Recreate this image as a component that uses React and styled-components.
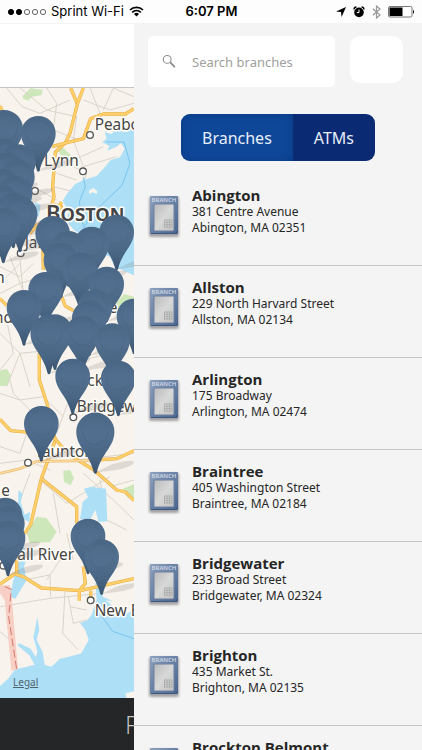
import styled, { createGlobalStyle } from 'styled-components';

const GlobalStyle = createGlobalStyle`
  * {
    box-sizing: border-box;
  }

  body {
    margin: 0;
    background: #fdfdfd;
    color: #262626;
    font-family: 'Noto Sans', 'Open Sans', sans-serif;
  }
`;

const Screen = styled.div`
  display: flex;
  flex-direction: column;
  height: 100vh;
  overflow: hidden;
`;

const StatusBar = styled.header`
  display: grid;
  grid-template-columns: 1fr auto 1fr;
  align-items: center;
  flex: none;
  height: 23px;
  padding: 0 7px 0 8px;
  background: #fdfdfd;
  color: #000;
  font-family: Inter, sans-serif;
  font-size: 13px;
  line-height: 23px;
`;

const Carrier = styled.div`
  display: flex;
  align-items: center;
  gap: 5px;
`;

const Clock = styled.time`
  font-weight: 600;
`;

const Indicators = styled.div`
  display: flex;
  align-items: center;
  justify-content: flex-end;
  gap: 7px;
`;

const Main = styled.div`
  display: flex;
  flex: 1;
  min-height: 0;
`;

const Peek = styled.section`
  display: flex;
  flex-direction: column;
  flex: none;
  width: 134px;
  overflow: hidden;
`;

const PeekHeader = styled.div`
  flex: none;
  height: 65px;
  background: #fff;
  border-top: 1px solid #f4f4f4;
  border-bottom: 1px solid #c4c4c4;
`;

const MapArea = styled.div`
  position: relative;
  flex: 1;
  min-height: 0;
  overflow: hidden;
  background: #f8f4ed;
`;

const MapDrawing = styled.svg`
  display: block;
  width: 100%;
  height: 100%;
`;

const LegalLink = styled.a`
  position: absolute;
  left: 13px;
  bottom: 9px;
  color: #4f646e;
  font-size: 10px;
  line-height: 14px;
`;

const PeekFooter = styled.footer`
  flex: none;
  height: 52px;
  padding-left: 125px;
  background: #252628;
  color: #c6c6c6;
  font-family: 'Open Sans', sans-serif;
  font-size: 25px;
  font-weight: 300;
  line-height: 52px;
  white-space: nowrap;
`;

const Panel = styled.aside`
  display: flex;
  flex-direction: column;
  flex: 1;
  min-width: 0;
  background: #f4f4f4;
`;

const SearchRow = styled.form`
  display: flex;
  align-items: flex-start;
  gap: 15px;
  padding: 13px 19px 0 14px;
`;

const SearchBox = styled.label`
  display: flex;
  align-items: center;
  flex: 1;
  min-width: 0;
  height: 51px;
  padding: 0 14px;
  gap: 15px;
  background: #fff;
  border-radius: 5px;
`;

const SearchInput = styled.input`
  flex: 1;
  min-width: 0;
  padding: 0;
  border: 0;
  outline: 0;
  background: transparent;
  color: #262626;
  font: 13px 'Noto Sans', 'Open Sans', sans-serif;

  &::placeholder {
    color: #a0a0a0;
    opacity: 1;
  }
`;

const SearchButton = styled.button`
  width: 53px;
  height: 47px;
  padding: 0;
  border: 0;
  border-radius: 10px;
  background: #fff;
`;

const Toggle = styled.div`
  display: flex;
  align-self: center;
  flex: none;
  height: 47px;
  margin: 27px 0 13px;
  border-radius: 9px;
  overflow: hidden;
`;

const ToggleButton = styled.button`
  padding: 0 21px;
  border: 0;
  background: ${props => (props.$active ? '#0f4798' : '#0a2a74')};
  box-shadow: ${props => (props.$active ? 'inset 0 0 8px #0a3a84' : 'none')};
  color: #e8effa;
  font: 16px 'Noto Sans', 'Open Sans', sans-serif;
`;

const List = styled.ul`
  flex: 1;
  min-height: 0;
  margin: 0;
  padding: 0;
  overflow-y: auto;
  scrollbar-width: none;
  list-style: none;
`;

const Row = styled.li`
  display: flex;
  gap: 10px;
  height: 92px;
  padding: 12px 12px 0;
  border-bottom: 1px solid #c4c4c4;
`;

const BranchIcon = styled.svg`
  flex: none;
  width: 36px;
  height: 48px;
  margin-top: 7px;
`;

const Name = styled.h2`
  margin: 0;
  font-family: 'Open Sans', 'Noto Sans', sans-serif;
  font-size: 15px;
  font-weight: 700;
  line-height: 18px;
`;

const Address = styled.address`
  font-size: 12px;
  font-style: normal;
  line-height: 16px;
`;

const branches = [
  { name: 'Abington', street: '381 Centre Avenue', city: 'Abington, MA 02351' },
  { name: 'Allston', street: '229 North Harvard Street', city: 'Allston, MA 02134' },
  { name: 'Arlington', street: '175 Broadway', city: 'Arlington, MA 02474' },
  { name: 'Braintree', street: '405 Washington Street', city: 'Braintree, MA 02184' },
  { name: 'Bridgewater', street: '233 Broad Street', city: 'Bridgewater, MA 02324' },
  { name: 'Brighton', street: '435 Market St.', city: 'Brighton, MA 02135' },
  { name: 'Brockton Belmont', street: '', city: '' },
];

// x, y of the pin head, in map units
const pins = [
  [12, 387, 1.1], [115, 400], [8, 468], [55, 485], [20, 510], [52, 530], [10, 560],
  [45, 580], [8, 610], [40, 630], [60, 642], [10, 675],
  [158, 700], [350, 696], [275, 732], [205, 745], [183, 780], [240, 810],
  [320, 852], [137, 868], [72, 922], [285, 920], [268, 954], [402, 948],
  [165, 995], [247, 1000], [147, 1000, 1.07], [337, 1022],
  [218, 1128], [355, 1134], [124, 1270], [286, 1295, 1.1],
  [15, 1545], [22, 1570], [24, 1614], [264, 1608], [305, 1670],
];

const Pin = ({ x, y, scale = 1 }) => (
  <g transform={`translate(${x} ${y}) scale(${scale})`}>
    <path d="M0 112 Q60 76 104 80 Q112 92 60 104 Z" fill="#77736c" opacity=".2" />
    <path d="M0 -52 A52 52 0 0 1 52 0 C52 42 16 58 4 112 Q0 118 -4 112 C-16 58 -52 42 -52 0 A52 52 0 0 1 0 -52 Z" fill="url(#pin)" />
    <circle r="35" fill="#54718f" opacity=".35" />
    <path d="M-35 0 A35 35 0 0 0 35 0" fill="none" stroke="#3e5a77" strokeWidth="3" opacity=".25" />
  </g>
);

const Roads = ({ d }) => (
  <>
    <path d={d} fill="none" stroke="#e6ab42" strokeWidth="10" strokeLinejoin="round" />
    <path d={d} fill="none" stroke="#ffd06a" strokeWidth="7" strokeLinejoin="round" />
  </>
);

const Town = ({ x, y }) => (
  <circle cx={x} cy={y} r="10" fill="#fff" stroke="#555" strokeWidth="4" />
);

const Label = styled.text`
  fill: #444;
  stroke: #fffdf8;
  stroke-width: 9px;
  stroke-linejoin: round;
  paint-order: stroke;
  font-family: 'Noto Sans', sans-serif;
  font-size: ${props => (props.$city ? 66 : 46)}px;
  font-weight: ${props => (props.$city ? 600 : 400)};
  font-variant: ${props => (props.$city ? 'small-caps' : 'normal')};
`;

const BranchMap = () => (
  <MapDrawing viewBox="0 264 402 1830" preserveAspectRatio="xMinYMin slice" role="img" aria-label="Map of branches">
    <defs>
      <linearGradient id="pin" x1="0" y1="0" x2="0" y2="1">
        <stop offset="0" stopColor="#4a6685" />
        <stop offset=".35" stopColor="#526f8f" />
        <stop offset=".7" stopColor="#496685" />
        <stop offset="1" stopColor="#3b5470" />
      </linearGradient>
    </defs>
    <rect y="264" width="402" height="1830" fill="#f8f4ed" />
    <g fill="#cde6ba">
      <path d="M68 288 L92 264 L128 270 L124 286 L96 290 L84 302 L70 296 Z" />
      <path d="M172 450 L190 444 L212 464 L216 480 L190 474 Z" />
      <path d="M344 915 L372 882 L402 890 V930 L350 940 Z" />
      <path d="M0 1112 L20 1106 L34 1128 L20 1158 L0 1158 Z" />
      <path d="M190 1412 L210 1410 L222 1434 L212 1456 L192 1446 Z" />
      <path d="M366 1468 L402 1452 V1500 L382 1490 Z" />
      <path d="M80 1600 L110 1550 L140 1555 L170 1596 L150 1626 L90 1630 Z" />
    </g>
    <g fill="none" stroke="#dad4cb" strokeWidth="3">
      <path d="M20 264 L66 320 L120 340 L210 300 M60 264 L140 330 L230 350 M140 264 L170 310 L160 390 M250 300 L330 330 L402 310 M270 264 L300 340 M340 264 L310 330 M160 390 L235 420 M230 350 L220 420 L250 500 L350 470 M180 480 L260 520 L240 580 L160 560 M170 520 L230 540 M340 264 L402 290 M220 480 L310 440 M100 560 L170 600" />
      <path d="M0 800 L60 830 L100 790 M30 770 L80 900 M0 880 L60 850 L130 830 M10 840 L60 790 M60 780 L70 880 M0 1000 L60 1060 L160 1050 M20 960 L40 1060 L0 1110 M60 1060 L20 1160 M60 1060 L90 1160 M120 1040 L170 1110 M250 1080 L330 1060" />
      <path d="M0 1180 L60 1200 L130 1190 L190 1250 M30 1140 L40 1180 L100 1240 M190 1140 L210 1190 L170 1300 M250 1200 L330 1240 L402 1220 M0 1390 L80 1380 L150 1410 M0 1340 L60 1360 L80 1300 M90 1420 L60 1500 M120 1440 L200 1510 L330 1430 M250 1420 L340 1500 L402 1560 M160 1480 L180 1600 M330 1460 L402 1440 M230 1380 L400 1360 M300 1440 L320 1560 L380 1590" />
      <path d="M0 1820 L150 1795 L300 1780 M70 1740 L150 1725 L152 1790 M195 1775 L188 1900 L235 1950 M0 1895 L30 1920 M205 1790 L220 1870 L260 1860 M210 1820 L260 1830 M180 1680 L140 1740 M200 1600 L220 1680" />
    </g>
    <g fill="#ade0f7">
      <path d="M402 385 L380 396 L350 390 L332 402 L314 396 L320 416 L306 426 L328 438 L322 452 L350 440 L362 430 L374 446 L360 472 L332 480 L314 502 L290 528 L250 540 L226 552 L202 580 L188 602 L206 636 L198 664 L222 690 L250 710 L300 760 L330 770 L344 800 L402 826 Z" />
      <path d="M105 605 L122 615 L116 650 L104 656 Z" />
      <path d="M252 1466 L274 1460 L318 1466 L322 1564 L296 1566 L286 1530 L272 1556 L240 1558 L248 1506 L264 1492 Z" />
      <path d="M56 1470 L68 1482 L62 1506 L74 1544 L90 1536 L88 1566 L74 1560 L54 1510 Z" />
      <path d="M40 1740 L70 1640 L84 1660 L72 1700 L80 1740 L46 1796 L30 1790 Z" />
      <path d="M0 2058 L24 2036 L46 2008 L80 2000 L104 1994 L88 1966 L52 1936 L58 1930 L92 1946 L108 1972 L112 1954 L100 1912 L112 1850 L118 1888 L110 1920 L128 1956 L134 1994 L154 2000 L180 1976 L216 1968 L244 1960 L266 1920 L256 1890 L240 1870 L262 1860 L274 1846 L290 1800 L286 1750 L300 1740 L308 1790 L330 1800 L358 1820 L366 1848 L402 1830 V2094 H0 Z" />
    </g>
    <path d="M358 440 L368 436 L366 450 L346 470 L338 462 Z M266 572 L280 564 L292 574 L290 582 L276 576 L270 584 Z" fill="#f8f4ed" />
    <path d="M318 1800 L352 1808 L388 1784 L402 1790 V1812 L380 1830 L374 1816 L340 1822 Z M376 2080 L402 2074 V2094 H380 Z" fill="#f8f4ed" />
    <path d="M320 426 L372 426 L390 490 L366 556 L278 640 L250 686 M250 532 L256 560 L238 606 L250 680 M306 1850 L338 1894 L402 1916" fill="none" stroke="#79c3ee" strokeWidth="3" />

    <path d="M0 1756 L30 1756 L36 1800 L54 2008 L34 2012 L14 1800 L0 1780 Z" fill="#f7cfc5" />
    <path d="M14 1760 L34 1768 L26 1850 L50 2008" fill="none" stroke="#d5766b" strokeWidth="3" strokeDasharray="24 10" />

    <Roads d="M212 264 L232 312 L210 400 L196 428 L166 456 L158 560 L162 590 L156 612 L184 620 L160 650 L110 676 L90 700" />
    <Roads d="M250 264 L232 312 M156 440 L200 428 L250 416 L272 356 L310 342 L376 342 L402 326 M0 318 L10 340 M184 606 L166 650" />
    <Roads d="M128 720 L130 810 M186 892 L196 918 L220 932 M0 896 L20 916 M118 1060 V1140 L142 1214 L166 1320 L124 1436 L92 1574 L74 1600" />
    <Roads d="M0 1258 L32 1292 L120 1300 M160 1310 L204 1362 L282 1410 L350 1470 L376 1476 L402 1502 M124 1436 L230 1520 V1570" />
    <Roads d="M286 1380 L350 1376 L402 1352 M0 1752 L44 1722 L70 1730 L124 1764 L240 1772 L402 1736 M250 1700 L256 1750 L238 1772 V1802 M272 1772 V1800 M50 1680 V1722" />
    <path d="M0 1420 L60 1406 L110 1384 L290 1382" fill="none" stroke="#ecb96e" strokeWidth="8" />
    <path d="M0 1420 L60 1406 L110 1384 L290 1382" fill="none" stroke="#fde0a6" strokeWidth="4" />

    <Town x={270} y={405} />
    <Town x={249} y={514} />
    <Town x={105} y={573} />
    <Town x={62} y={760} />
    <Town x={220} y={1252} />
    <Town x={84} y={1388} />
    <Town x={10} y={1697} />
    <Town x={272} y={1801} />
    <Label x="284" y="389">Peabody</Label>
    <Label x="132" y="498">Lynn</Label>
    <Label x="138" y="662" $city>Boston</Label>
    <Label x="74" y="745">Jamaica</Label>
    <Label x="-14" y="850">n</Label>
    <Label x="-18" y="969">nd</Label>
    <Label x="326" y="938">e</Label>
    <Label x="262" y="1157">ck</Label>
    <Label x="230" y="1236">Bridgewater</Label>
    <Label x="104" y="1371">Taunton</Label>
    <Label x="4" y="1488">e</Label>
    <Label x="28" y="1680">Fall River</Label>
    <Label x="284" y="1848">New Bedford</Label>
    {pins.map(([x, y, scale]) => (
      <Pin key={`${x}-${y}`} x={x} y={y} scale={scale} />
    ))}
  </MapDrawing>
);

const SignalIcon = () => (
  <svg width="38" height="8" viewBox="0 0 38 8" aria-hidden="true">
    {[3, 11, 19, 27, 35].map((cx, i) => (
      <circle key={cx} cx={cx} cy="4" r="2.6" fill={i < 2 ? '#000' : 'none'} stroke="#000" strokeWidth={i < 2 ? 1 : 0.6} />
    ))}
  </svg>
);

const WifiIcon = () => (
  <svg width="15" height="11" viewBox="0 0 15 11" fill="none" stroke="#000" strokeWidth="1.7" aria-hidden="true">
    <path d="M1 4 A9.2 9.2 0 0 1 14 4 M3.2 6.3 A6 6 0 0 1 11.8 6.3" />
    <path d="M7.5 10.5 L5 8 A3.6 3.6 0 0 1 10 8 Z" fill="#000" stroke="none" />
  </svg>
);

const LocationIcon = () => (
  <svg width="10" height="10" viewBox="0 0 10 10" aria-hidden="true">
    <path d="M10 0 L5.6 10 L5 5 L0 4.6 Z" />
  </svg>
);

const AlarmIcon = () => (
  <svg width="12" height="12" viewBox="0 0 12 12" aria-hidden="true">
    <circle cx="6" cy="6.4" r="4.8" />
    <path d="M1 3.4 Q1 1.2 3.4 1 M11 3.4 Q11 1.2 8.6 1" fill="none" stroke="#000" strokeWidth="1.3" />
    <path d="M6 3.6 V6.6 H3.8" fill="none" stroke="#fff" strokeWidth="1" />
  </svg>
);

const BluetoothIcon = () => (
  <svg width="9" height="14" viewBox="0 0 9 14" fill="none" stroke="#999" strokeWidth="1.2" aria-hidden="true">
    <path d="M0.8 3.8 L8 10 L4.5 13 V1 L8 4 L0.8 10.2" />
  </svg>
);

const BatteryIcon = () => (
  <svg width="27" height="12" viewBox="0 0 27 12" aria-hidden="true">
    <rect x="0.5" y="0.5" width="23.5" height="10.5" rx="1.5" fill="#fff" stroke="#777" />
    <rect x="1.5" y="1.5" width="13" height="8.5" />
    <path d="M25 3.5 Q27 5.8 25 8 Z" />
  </svg>
);

const MagnifierIcon = () => (
  <svg width="15" height="15" viewBox="0 0 15 15" fill="none" stroke="#8d8d8d" aria-hidden="true">
    <circle cx="5.2" cy="5.4" r="3.9" strokeWidth="1.1" />
    <path d="M8 8.2 L9.2 9.4" strokeWidth="1.2" />
    <path d="M9 9.2 L12.4 12.6" strokeWidth="1.8" strokeLinecap="round" />
  </svg>
);

const BranchBadge = () => (
  <BranchIcon viewBox="0 0 36 48" aria-hidden="true">
    <defs>
      <linearGradient id="frame" x1="0" y1="0" x2="1" y2="1">
        <stop offset="0" stopColor="#8fa1bd" />
        <stop offset=".5" stopColor="#6780a5" />
        <stop offset="1" stopColor="#4a648e" />
      </linearGradient>
      <linearGradient id="plate" x1="0" y1="0" x2="1" y2="1">
        <stop offset="0" stopColor="#b9babc" />
        <stop offset=".5" stopColor="#d8d8d8" />
        <stop offset="1" stopColor="#c0c0c0" />
      </linearGradient>
      <filter id="soft" x="-20%" y="-20%" width="140%" height="140%">
        <feGaussianBlur stdDeviation="1.2" />
      </filter>
    </defs>
    <rect x="3" y="4" width="30" height="40" rx="2" fill="#555" opacity=".5" filter="url(#soft)" />
    <rect x="4" y="3" width="28" height="38" rx="1" fill="url(#frame)" />
    <path d="M5 40.5 H30 L32 38" fill="none" stroke="#3f5780" />
    <rect x="8" y="11" width="20" height="27" rx="1" fill="url(#plate)" stroke="#6e81a0" />
    <path d="M18 27 h8 M18 29.3 h8 M18 31.6 h8 M18 34 h8 M18.5 26.6 v8 M21 26.6 v8 M23.5 26.6 v8 M26 26.6 v8" stroke="#a8a8a8" strokeWidth=".7" />
    <text x="18" y="9" textAnchor="middle" fill="#d3dcea" fontFamily="Open Sans, sans-serif" fontSize="6" fontWeight="600">BRANCH</text>
  </BranchIcon>
);

const App = () => (
  <>
    <GlobalStyle />
    <Screen>
      <StatusBar>
        <Carrier>
          <SignalIcon />
          Sprint Wi-Fi
          <WifiIcon />
        </Carrier>
        <Clock>6:07 PM</Clock>
        <Indicators>
          <LocationIcon />
          <AlarmIcon />
          <BluetoothIcon />
          <BatteryIcon />
        </Indicators>
      </StatusBar>
      <Main>
        <Peek>
          <PeekHeader />
          <MapArea>
            <BranchMap />
            <LegalLink href="#legal">Legal</LegalLink>
          </MapArea>
          <PeekFooter>F</PeekFooter>
        </Peek>
        <Panel>
          <SearchRow>
            <SearchBox>
              <MagnifierIcon />
              <SearchInput type="text" placeholder="Search branches" aria-label="Search branches" />
            </SearchBox>
            <SearchButton type="button" aria-label="Search" />
          </SearchRow>
          <Toggle>
            <ToggleButton type="button" aria-pressed="true" $active>Branches</ToggleButton>
            <ToggleButton type="button" aria-pressed="false">ATMs</ToggleButton>
          </Toggle>
          <List>
            {branches.map(({ name, street, city }) => (
              <Row key={name}>
                <BranchBadge />
                <div>
                  <Name>{name}</Name>
                  <Address>
                    {street}<br />
                    {city}
                  </Address>
                </div>
              </Row>
            ))}
          </List>
        </Panel>
      </Main>
    </Screen>
  </>
);

export default App;
